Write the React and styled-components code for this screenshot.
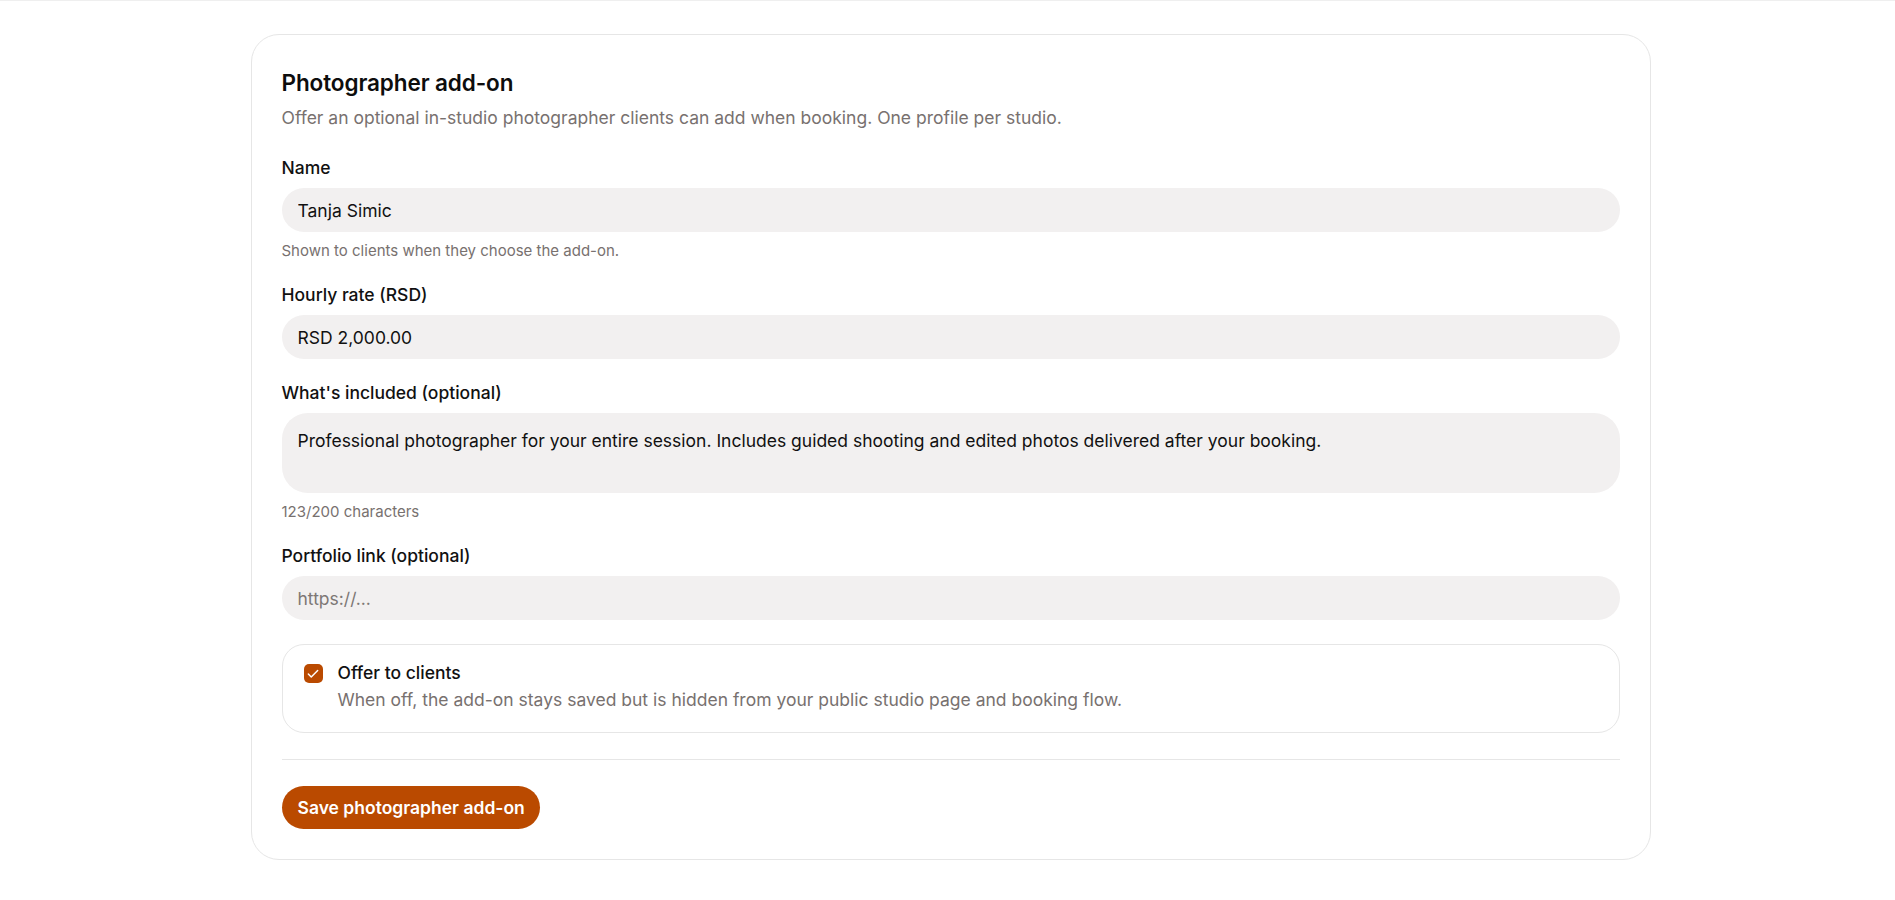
import React, { useState } from 'react';
import styled, { createGlobalStyle } from 'styled-components';

const GlobalStyle = createGlobalStyle`
  *, *::before, *::after {
    box-sizing: border-box;
  }
  html, body {
    margin: 0;
    padding: 0;
  }
  body {
    font-family: Inter, "Noto Sans", sans-serif;
    background: #ffffff;
    color: #111111;
  }
`;

const Page = styled.main`
  border-top: 1px solid #efefef;
  padding: 33px 24px 40px;
  display: flex;
  justify-content: center;
`;

const Card = styled.section`
  width: 1400px;
  margin-left: 6px;
  border: 1px solid #e6e6e6;
  border-radius: 28px;
  background: #fff;
  padding: 33px 30px 30px 30px;
`;

const Title = styled.h2`
  margin: 0;
  font-size: 22.5px;
  line-height: 30px;
  font-weight: 600;
  color: #0d0d0d;
  letter-spacing: -0.1px;
`;

const Subtitle = styled.p`
  margin: 7px 0 0;
  font-size: 17.5px;
  line-height: 26px;
  color: #78716f;
`;

const Form = styled.form`
  margin-top: 26px;
  display: flex;
  flex-direction: column;
  gap: 23px;
`;

const Field = styled.div`
  display: flex;
  flex-direction: column;
`;

const Label = styled.label`
  font-size: 17.5px;
  line-height: 22px;
  font-weight: 500;
  color: #111;
  margin-bottom: 9px;
`;

const Input = styled.input`
  height: 44px;
  width: 100%;
  border: none;
  outline: none;
  border-radius: 999px;
  background: #f2f0f0;
  padding: 0 16px;
  font-family: inherit;
  font-size: 17.5px;
  color: #111;

  &::placeholder {
    color: #7d7775;
  }
`;

const TextArea = styled.textarea`
  height: 80px;
  width: 100%;
  border: none;
  outline: none;
  resize: none;
  border-radius: 26px;
  background: #f2f0f0;
  padding: 15px 16px;
  font-family: inherit;
  font-size: 17.5px;
  line-height: 26px;
  color: #111;
`;

const Hint = styled.span`
  margin-top: 9px;
  font-size: 15px;
  line-height: 20px;
  color: #78716f;
`;

const ToggleBox = styled.label`
  margin-top: 1px;
  display: flex;
  align-items: flex-start;
  gap: 15px;
  border: 1px solid #e6e6e6;
  border-radius: 22px;
  padding: 17px 20px 19px 21px;
  cursor: pointer;
`;

const Check = styled.span`
  flex: none;
  width: 19px;
  height: 19px;
  margin-top: 2px;
  border-radius: 5px;
  background: ${p => (p.$on ? '#ba4a00' : '#fff')};
  border: ${p => (p.$on ? 'none' : '1px solid #c8c4c2')};
  display: flex;
  align-items: center;
  justify-content: center;
`;

const ToggleText = styled.div`
  display: flex;
  flex-direction: column;
  gap: 3px;
`;

const ToggleTitle = styled.span`
  font-size: 17.5px;
  line-height: 22px;
  font-weight: 500;
  color: #111;
`;

const ToggleDesc = styled.span`
  font-size: 17.5px;
  line-height: 26px;
  color: #78716f;
`;

const Divider = styled.hr`
  margin: 3px 0 0;
  border: none;
  border-top: 1px solid #e6e6e6;
`;

const SaveButton = styled.button`
  align-self: flex-start;
  margin-top: 3px;
  height: 43px;
  padding: 0 15px 0 16px;
  border: none;
  border-radius: 999px;
  background: #ba4a00;
  color: #fff;
  font-family: inherit;
  font-size: 17.5px;
  font-weight: 600;
  cursor: pointer;
`;

export default function App() {
  const [offer, setOffer] = useState(true);
  const [about, setAbout] = useState(
    'Professional photographer for your entire session. Includes guided shooting and edited photos delivered after your booking.'
  );

  return (
    <>
      <GlobalStyle />
      <Page>
        <Card>
          <Title>Photographer add-on</Title>
          <Subtitle>
            Offer an optional in-studio photographer clients can add when booking. One profile per studio.
          </Subtitle>

          <Form onSubmit={e => e.preventDefault()}>
            <Field>
              <Label htmlFor="pname">Name</Label>
              <Input id="pname" defaultValue="Tanja Simic" />
              <Hint>Shown to clients when they choose the add-on.</Hint>
            </Field>

            <Field>
              <Label htmlFor="prate">Hourly rate (RSD)</Label>
              <Input id="prate" defaultValue="RSD 2,000.00" />
            </Field>

            <Field>
              <Label htmlFor="pabout">What's included (optional)</Label>
              <TextArea
                id="pabout"
                value={about}
                maxLength={200}
                onChange={e => setAbout(e.target.value)}
              />
              <Hint>{about.length}/200 characters</Hint>
            </Field>

            <Field>
              <Label htmlFor="plink">Portfolio link (optional)</Label>
              <Input id="plink" placeholder="https://..." />
            </Field>

            <ToggleBox onClick={() => setOffer(v => !v)}>
              <Check $on={offer}>
                {offer && (
                  <svg width="14" height="14" viewBox="0 0 24 24" fill="none" stroke="#fff" strokeWidth="2.5" strokeLinecap="round" strokeLinejoin="round">
                    <path d="M20 6 9 17l-5-5" />
                  </svg>
                )}
              </Check>
              <ToggleText>
                <ToggleTitle>Offer to clients</ToggleTitle>
                <ToggleDesc>
                  When off, the add-on stays saved but is hidden from your public studio page and booking flow.
                </ToggleDesc>
              </ToggleText>
            </ToggleBox>

            <Divider />

            <SaveButton type="submit">Save photographer add-on</SaveButton>
          </Form>
        </Card>
      </Page>
    </>
  );
}
